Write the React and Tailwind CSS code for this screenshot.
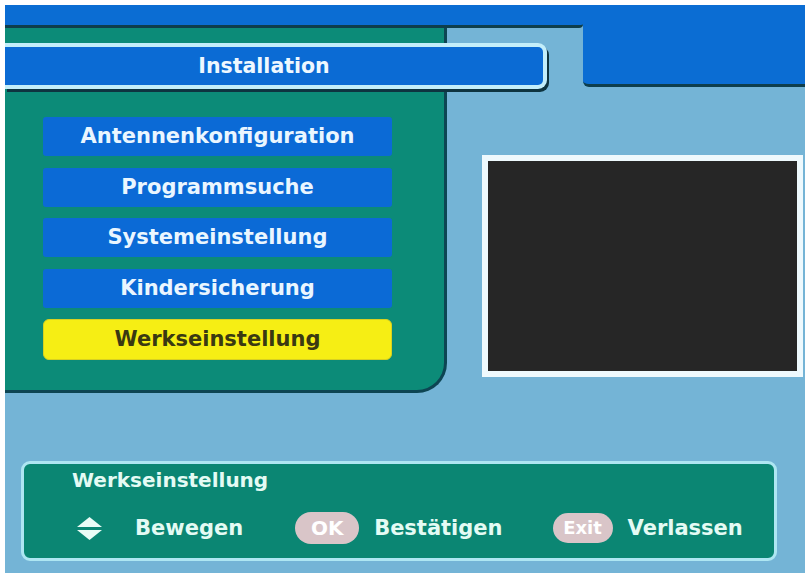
import React from "react";

const items = [
  "Antennenkonfiguration",
  "Programmsuche",
  "Systemeinstellung",
  "Kindersicherung",
  "Werkseinstellung",
];

function UpDown() {
  return (
    <svg width="25" height="23" viewBox="0 0 25 23">
      <polygon points="0,10 12.5,0 25,10" fill="#eafcf6" />
      <polygon points="0,13 12.5,23 25,13" fill="#eafcf6" />
    </svg>
  );
}

export default function App() {
  const active = 4;

  return (
    <div
      className="w-[809px] h-[573px] bg-white pt-[5px] pl-[5px] pr-[4px] overflow-hidden"
      style={{ fontFamily: '"DejaVu Sans", "Liberation Sans", sans-serif' }}
    >
      <div className="h-[568px] bg-[#74b4d6] flex flex-col">
        {/* top strip */}
        <div className="flex h-[23px]">
          <div className="w-[578px] h-[23px] bg-[#0b6dd3] border-b-[3px] border-[#0e3e4c] rounded-br-[4px]" />
          <div className="flex-1 h-[23px] bg-[#0b6dd3]" />
        </div>

        <div className="flex">
          {/* menu panel */}
          <div className="w-[442px] h-[365px] bg-[#0c8b78] rounded-br-[30px] border-r-[3px] border-b-[3px] border-[#0d4553] pt-[15px]">
            <div className="relative z-10 w-[542px] h-[46px] bg-[#0b6bd4] border-y-[4px] border-r-[4px] border-[#c3eefa] rounded-r-[9px] shadow-[2px_3px_0_#0e3440] flex items-center justify-center pr-[20px]">
              <span className="text-[20.5px] font-bold text-[#eef8ff] leading-none">
                Installation
              </span>
            </div>

            <div className="mt-[28px] pl-[38px] flex flex-col gap-[11.5px]">
              {items.map((label, i) =>
                i === active ? (
                  <div
                    key={label}
                    className="w-[349px] h-[41px] bg-[#f6ee14] rounded-[6px] border border-[#d8d020] flex items-center justify-center"
                  >
                    <span className="text-[21px] font-bold text-[#3a3912] leading-none">
                      {label}
                    </span>
                  </div>
                ) : (
                  <div
                    key={label}
                    className="w-[349px] h-[39px] bg-[#0b6ad6] rounded-[3px] flex items-center justify-center"
                  >
                    <span className="text-[21px] font-bold text-[#eaf6ff] leading-none">
                      {label}
                    </span>
                  </div>
                )
              )}
            </div>
          </div>

          {/* right side */}
          <div className="flex-1 flex flex-col">
            <div className="flex">
              <div className="w-[136px]" />
              <div className="flex-1 h-[59px] bg-[#0b6dd3] border-b-[3px] border-[#0e3e4c] rounded-bl-[6px]" />
            </div>
            <div className="mt-[68px] ml-[35px] w-[321px] h-[222px] border-[6px] border-[#eef9fd] bg-[#262626]" />
          </div>
        </div>

        {/* help bar */}
        <div className="mt-[68px] ml-[16px] w-[756px] h-[100px] bg-[#0b8673] border-[3px] border-[#aee6f2] rounded-[9px] text-[#e4fbf4] font-bold">
          <div className="pt-[4px] pl-[48px] text-[20px] leading-[24px]">
            Werkseinstellung
          </div>
          <div className="mt-[19px] pl-[53px] h-[34px] flex items-center text-[21px] leading-none">
            <UpDown />
            <span className="ml-[33px]">Bewegen</span>
            <span className="ml-[52px] w-[64px] h-[32px] rounded-full bg-[#d9c5c8] text-white text-[20px] flex items-center justify-center">
              OK
            </span>
            <span className="ml-[15px]">Bestätigen</span>
            <span className="ml-[50px] w-[60px] h-[30px] rounded-full bg-[#d9c5c8] text-white text-[18px] flex items-center justify-center">
              Exit
            </span>
            <span className="ml-[15px]">Verlassen</span>
          </div>
        </div>
      </div>
    </div>
  );
}
